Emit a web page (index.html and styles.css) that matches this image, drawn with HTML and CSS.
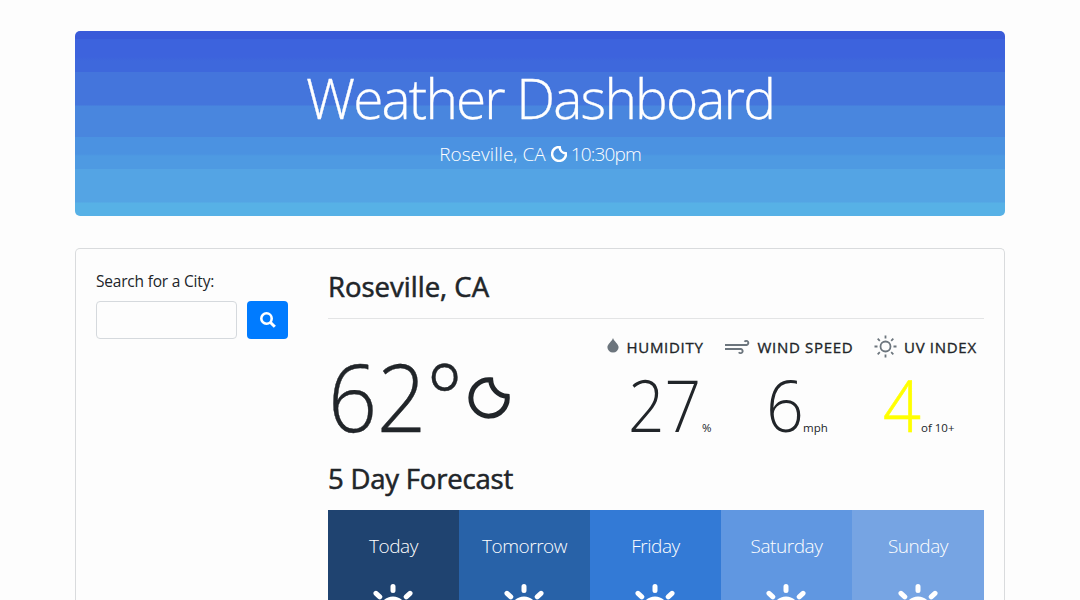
FILE: index.html
```html
<!DOCTYPE html>
<html lang="en">
<head>
<meta charset="utf-8">
<title>Weather Dashboard</title>
<link rel="stylesheet" href="styles.css">
</head>
<body>
<svg class="defs" width="0" height="0">
  <symbol id="moon" viewBox="0 0 42 42"><path d="M22.7 2.8A18.2 18.2 0 1 0 39.2 19.3A17.5 17.5 0 0 1 22.7 2.8Z" fill="none" stroke="currentColor"/></symbol>
  <symbol id="sun" viewBox="0 0 54 54"><g fill="none" stroke="currentColor" stroke-width="5" stroke-linecap="round"><circle cx="27" cy="27" r="11"/><path d="M27 3.500v4M27 46.500v4M3.500 27h4M46.500 27h4M10 10.300l3.800 3.500M40.200 40.200l3.500 3.500M44 10.300l-3.800 3.500M13.800 40.200l-3.500 3.500"/></g></symbol>
</svg>
<main class="container">
  <header class="hero">
    <h1 class="hero-title">Weather Dashboard</h1>
    <p class="hero-sub"><span class="hero-city">Roseville, CA</span><svg class="hero-moon"><use href="#moon"/></svg><span class="hero-time">10:30pm</span></p>
  </header>
  <section class="card">
    <form class="search">
      <label class="search-label" for="city">Search for a City:</label>
      <div class="search-row">
        <input class="search-input" id="city" type="text">
        <button class="search-button" type="button" aria-label="Search"><svg width="16" height="16" viewBox="0 0 16 16" fill="none" stroke="#fff"><circle cx="6.500" cy="6.500" r="5.200" stroke-width="2.600"/><path d="M10.500 10.500l4.300 4.300" stroke-width="3"/></svg></button>
      </div>
    </form>
    <div class="weather">
      <h2 class="heading city">Roseville, CA</h2>
      <div class="current">
        <div class="temp"><span class="temp-value">62°</span><svg class="temp-moon"><use href="#moon"/></svg></div>
        <div class="stat humidity">
          <div class="stat-head"><svg class="drop" width="12" height="15" viewBox="0 0 12 15"><path d="M6 0C5 3.500 .4 6 .4 9.300a5.600 5.300 0 0 0 11.200 0C11.600 6 7 3.500 6 0Z" fill="#6c757d"/></svg><span class="stat-label">HUMIDITY</span></div>
          <div class="stat-value"><span class="number">27</span><span class="unit">%</span></div>
        </div>
        <div class="stat wind">
          <div class="stat-head"><svg width="25" height="16" viewBox="0 0 25 16" fill="none" stroke="#6c757d" stroke-width="1.900"><path d="M0 6H21.700a2.100 2.100 0 1 0-2.200-3.200M0 10H16a2.100 2.100 0 1 1-2.200 3.200"/></svg><span class="stat-label">WIND SPEED</span></div>
          <div class="stat-value"><span class="number">6</span><span class="unit">mph</span></div>
        </div>
        <div class="stat uv">
          <div class="stat-head"><svg class="uv-sun" width="23" height="23" viewBox="0 0 23 23" fill="none" stroke="#6c757d" stroke-width="1.800"><circle cx="11.500" cy="11.500" r="5"/><path d="M11.500 .5v3M11.500 19.500v3M.5 11.500h3M19.500 11.500h3M3.700 3.700l2.100 2.100M17.200 17.200l2.100 2.100M19.300 3.700l-2.100 2.100M5.800 17.200l-2.100 2.100"/></svg><span class="stat-label">UV INDEX</span></div>
          <div class="stat-value"><span class="number yellow">4</span><span class="unit">of 10+</span></div>
        </div>
      </div>
      <h2 class="heading forecast-title">5 Day Forecast</h2>
      <div class="forecast">
        <div class="day day-1"><span class="day-name">Today</span><svg class="day-icon"><use href="#sun"/></svg></div>
        <div class="day day-2"><span class="day-name">Tomorrow</span><svg class="day-icon"><use href="#sun"/></svg></div>
        <div class="day day-3"><span class="day-name">Friday</span><svg class="day-icon"><use href="#sun"/></svg></div>
        <div class="day day-4"><span class="day-name">Saturday</span><svg class="day-icon"><use href="#sun"/></svg></div>
        <div class="day day-5"><span class="day-name">Sunday</span><svg class="day-icon"><use href="#sun"/></svg></div>
      </div>
    </div>
  </section>
</main>
</body>
</html>
```
FILE: styles.css
```css
* { box-sizing: border-box; }
html { overflow: hidden; }
body { margin: 0; height: 600px; overflow: hidden; background: #fdfdfd; color: #212529; font-family: "Open Sans", "Noto Sans", sans-serif; }
svg { display: block; flex: none; }
.defs { position: absolute; }
h1, h2, p { margin: 0; }
.container { width: 930px; margin: 0 auto; padding-top: 31px; }
.hero { height: 185px; padding-top: 33px; border-radius: 5px; color: #fff; text-align: center;
  background: linear-gradient(#3a5bd9 0 8px, #3d63dd 8px 26px, #3e68dc 30px 41px, #4475dc 41px 74px, #4986de 75px 106px, #4b92e1 106px 123px, #4e9ae2 125px 138px, #54a4e4 138px 171px, #57b1e6 172px 185px); }
.hero-title { font-size: 55px; line-height: 68px; font-weight: 300; letter-spacing: -1.850px; white-space: nowrap; -webkit-text-stroke: .3px; }
.hero-sub { display: flex; justify-content: center; align-items: center; margin-top: 7px; font-size: 19px; line-height: 30px; font-weight: 300; letter-spacing: .05px; }
.hero-time { letter-spacing: -.85px; }
.hero-moon { width: 16px; height: 16px; margin: 0 4px 0 5px; stroke-width: 6.500px; }
.card { display: flex; height: 352px; margin-top: 32px; padding: 20px 20px 0; border: 1px solid #d9dbdd; border-bottom: 0; border-radius: 5px 5px 0 0; }
.search { width: 192px; margin-right: 40px; }
.search-label { display: block; font-size: 15.500px; line-height: 24px; height: 32px; letter-spacing: -.2px; white-space: nowrap; }
.search-row { display: flex; gap: 10px; }
.search-input { width: 141px; height: 38px; border: 1px solid #d5d9dd; border-radius: 4px; background: #fdfdfd; }
.search-button { display: flex; align-items: center; justify-content: center; width: 41px; height: 38px; padding: 0; border: 0; border-radius: 4px; background: #007bff; }
.weather { width: 656px; }
.heading { font-size: 27.500px; line-height: 36px; font-weight: 500; white-space: nowrap; -webkit-text-stroke: .55px; }
.city { height: 50px; border-bottom: 1px solid #e3e4e5; }
.current { display: flex; height: 142px; }
.temp { display: flex; width: 279px; height: 142px; }
.temp-value { width: 133px; font-size: 94px; line-height: 130px; font-weight: 300; margin-top: 12px; white-space: nowrap; transform: scaleX(.915); transform-origin: 0 0; -webkit-text-stroke: .4px; }
.temp-moon { width: 42px; height: 42px; margin-top: 58px; margin-left: 6.500px; stroke-width: 5px; }
.stat { padding-top: 16px; }
.humidity { width: 118px; }
.wind { width: 149px; }
.stat-head { display: flex; align-items: center; height: 24px; font-size: 15px; font-weight: 500; letter-spacing: .7px; white-space: nowrap; gap: 7.500px; -webkit-text-stroke: .35px; }
.drop { margin-bottom: 3px; }
.uv-sun { margin-bottom: 2px; margin-left: -.5px; }
.stat-value { display: flex; align-items: baseline; line-height: 90px; white-space: nowrap; }
.humidity .stat-value { padding-left: 21px; }
.wind .stat-value { padding-left: 41px; }
.uv .stat-value { padding-left: 9px; }
.number { width: 37px; font-size: 72px; font-weight: 300; transform: scaleX(.92); transform-origin: 0 0; }
.humidity .number { width: 74px; transform: scaleX(.89); }
.unit { font-size: 11.500px; }
.number.yellow { width: 38px; color: #ff0; -webkit-text-stroke: .6px; }
.forecast-title { height: 49px; letter-spacing: -.2px; }
.forecast { display: grid; grid-template-columns: repeat(4, 131px) 132px; height: 90px; color: #fff; }
.day { display: flex; flex-direction: column; align-items: center; padding-top: 21px; overflow: hidden; }
.day-name { font-size: 19px; line-height: 30px; font-weight: 300; letter-spacing: -.45px; }
.day-icon { width: 54px; height: 54px; margin-top: 22px; margin-right: 1px; }
.day-1 { background: #1f4370; }
.day-2 { background: #2862a8; }
.day-3 { background: #337ad6; }
.day-4 { background: #6097e1; }
.day-5 { background: #76a4e3; }
```
